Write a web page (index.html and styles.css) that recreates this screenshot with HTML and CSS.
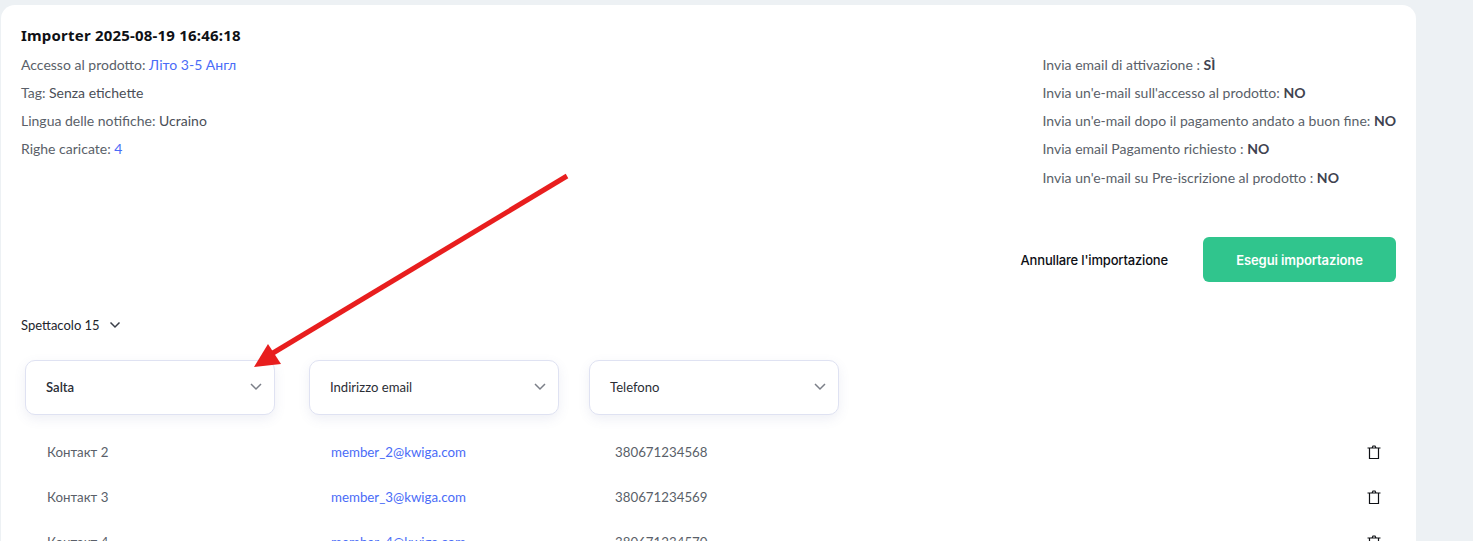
FILE: index.html
```html
<!DOCTYPE html>
<html lang="en">
<head>
    <meta charset="UTF-8">
    <meta name="viewport" content="width=device-width, initial-scale=1.0">
    <title>Importer</title>
    <link rel="stylesheet" href="styles.css">
</head>
<body>
    <div class="card">
        <div class="summary">
            <div class="info">
                <h1>Importer 2025-08-19 16:46:18</h1>
                <p>Accesso al prodotto: <a href="#">Літо 3-5 Англ</a></p>
                <p>Tag: <span class="val">Senza etichette</span></p>
                <p>Lingua delle notifiche: <span class="val">Ucraino</span></p>
                <p>Righe caricate: <a href="#">4</a></p>
            </div>
            <div class="options">
                <p>Invia email di attivazione : <b>SÌ</b></p>
                <p>Invia un'e-mail sull'accesso al prodotto: <b>NO</b></p>
                <p>Invia un'e-mail dopo il pagamento andato a buon fine: <b>NO</b></p>
                <p>Invia email Pagamento richiesto : <b>NO</b></p>
                <p class="last">Invia un'e-mail su Pre-iscrizione al prodotto : <b>NO</b></p>
            </div>
        </div>

        <div class="actions">
            <button class="btn-cancel">Annullare l'importazione</button>
            <button class="btn-run">Esegui importazione</button>
        </div>

        <div class="show-count">
            Spettacolo 15
            <svg class="chev-small" width="12" height="8" viewBox="0 0 12 8"><path d="M1.5 1.5 6 6l4.5-4.5"/></svg>
        </div>

        <div class="selects">
            <div class="select-cell first">
                <div class="select"><span class="strong">Salta</span><svg class="chev" width="12" height="8" viewBox="0 0 12 8"><path d="M1 1l5 5 5-5"/></svg></div>
            </div>
            <div class="select-cell">
                <div class="select"><span>Indirizzo email</span><svg class="chev" width="12" height="8" viewBox="0 0 12 8"><path d="M1 1l5 5 5-5"/></svg></div>
            </div>
            <div class="select-cell">
                <div class="select"><span>Telefono</span><svg class="chev" width="12" height="8" viewBox="0 0 12 8"><path d="M1 1l5 5 5-5"/></svg></div>
            </div>
        </div>

        <div class="row">
            <span>Контакт 2</span>
            <a href="#">member_2@kwiga.com</a>
            <span>380671234568</span>
            <svg class="trash" width="14" height="14" viewBox="0 0 14 14"><path d="M0.5 3h13M2.5 3v10.5h9V3M5 3l1-2h2l1 2"/></svg>
        </div>
        <div class="row">
            <span>Контакт 3</span>
            <a href="#">member_3@kwiga.com</a>
            <span>380671234569</span>
            <svg class="trash" width="14" height="14" viewBox="0 0 14 14"><path d="M0.5 3h13M2.5 3v10.5h9V3M5 3l1-2h2l1 2"/></svg>
        </div>
        <div class="row">
            <span>Контакт 4</span>
            <a href="#">member_4@kwiga.com</a>
            <span>380671234570</span>
            <svg class="trash" width="14" height="14" viewBox="0 0 14 14"><path d="M0.5 3h13M2.5 3v10.5h9V3M5 3l1-2h2l1 2"/></svg>
        </div>
    </div>

    <!-- annotation drawn over the page -->
    <svg class="arrow" width="600" height="400" viewBox="0 0 600 400">
        <path class="arrow-line" d="M567 176 268 356"/>
        <path class="arrow-head" d="M254 367 268 344 281 364Z"/>
    </svg>
</body>
</html>
```

FILE: styles.css
```css
html, body {
    height: 100%;
}
body {
    margin: 0;
    background-color: #edf1f4;
    font-family: Lato, sans-serif;
    font-size: 14px;
    color: #5a5f69;
    overflow: hidden;
    position: relative;
}
.card {
    width: 1415px;
    height: 700px;
    margin: 5px 0 0 1px;
    box-sizing: border-box;
    padding: 20px 20px 0;
    background: #fff;
    border-radius: 14px 14px 0 0;
}
a {
    color: #4a6cf7;
    text-decoration: none;
}
p {
    margin: 0;
    height: 28px;
    line-height: 28px;
}
h1 {
    margin: 0 0 2px;
    height: 24px;
    line-height: 20px;
    font-family: "Noto Sans", sans-serif;
    font-size: 15px;
    font-weight: 700;
    letter-spacing: 0.2px;
    color: #0f1115;
}
.summary {
    display: flex;
    justify-content: space-between;
    height: 194px;
}
.options {
    padding-top: 26px;
}
.options .last {
    margin-top: 1px;
}
.val {
    color: #4a4e57;
}
b {
    color: #3f4350;
    font-weight: 700;
}
.actions {
    display: flex;
    justify-content: flex-end;
    align-items: center;
    gap: 35px;
    margin-top: 18px;
    height: 45px;
}
button {
    font-family: Inter, sans-serif;
    font-size: 13px;
    border: none;
    cursor: pointer;
}
.btn-cancel {
    background: none;
    padding: 0;
    color: #0d0f14;
    font-weight: 500;
    letter-spacing: -0.17px;
}
.btn-run {
    width: 193px;
    height: 45px;
    background: #30c58d;
    color: #fff;
    font-weight: 600;
    letter-spacing: -0.1px;
    border-radius: 6px;
}
.show-count {
    display: flex;
    align-items: center;
    gap: 9px;
    margin-top: 33px;
    height: 20px;
    font-size: 13px;
    color: #22252c;
}
.chev-small path, .chev path {
    fill: none;
    stroke-width: 1.5;
}
.chev-small path {
    stroke: #3a3e48;
}
.chev path {
    stroke: #7b7f88;
}
.selects {
    display: grid;
    grid-template-columns: 284px 280px 250px;
    margin: 25px 0 0 4px;
}
.select {
    width: 250px;
    height: 55px;
    box-sizing: border-box;
    display: flex;
    align-items: center;
    justify-content: space-between;
    padding: 0 12px 2px 20px;
    background: #fff;
    border: 1px solid #dfe2f2;
    border-radius: 10px;
    box-shadow: 0 4px 12px rgba(90, 100, 160, 0.1);
    font-size: 13.1px;
    color: #2b2e36;
}
.select .strong {
    font-weight: 600;
}
.row {
    display: grid;
    grid-template-columns: 284px 284px 1fr 14px;
    align-items: center;
    height: 45px;
    padding: 0 15px 0 26px;
    font-size: 13.3px;
}
.selects + .row {
    margin-top: 14px;
}
.trash path {
    fill: none;
    stroke: #0f1115;
    stroke-width: 1.2;
}
.arrow {
    position: absolute;
    left: 0;
    top: 0;
    pointer-events: none;
}
.arrow-line {
    stroke: #e81e1e;
    stroke-width: 5;
    fill: none;
}
.arrow-head {
    fill: #e81e1e;
}
```
